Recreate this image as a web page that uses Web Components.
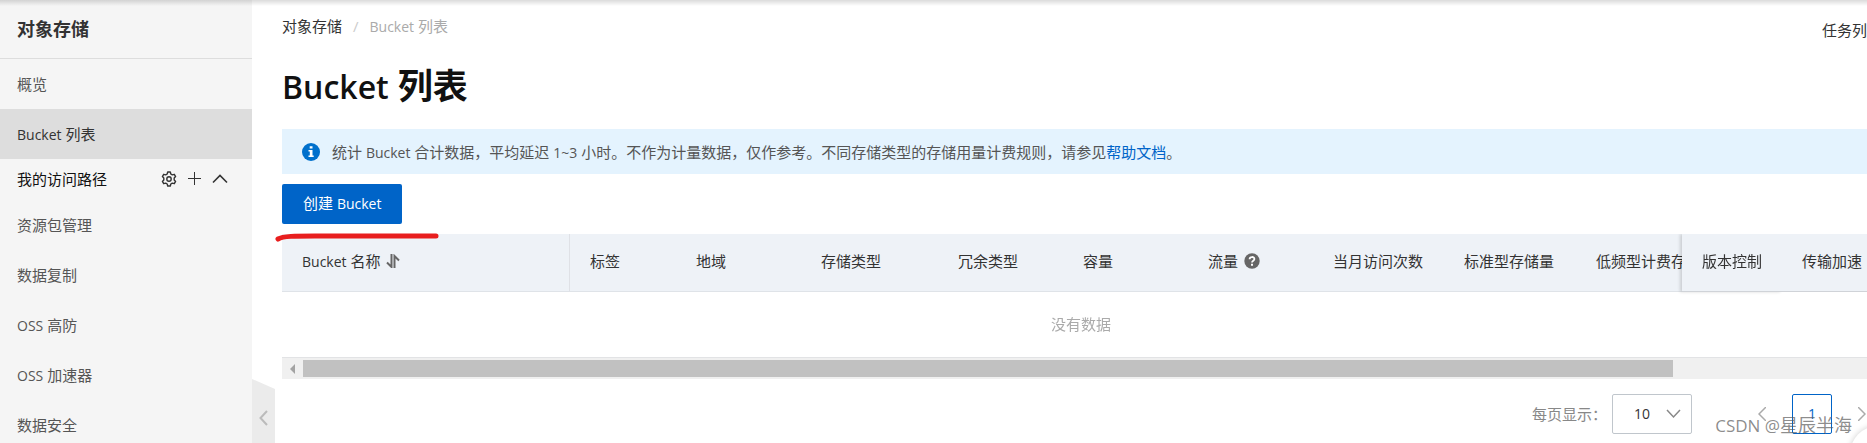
<!DOCTYPE html>
<html lang="zh-CN">
<head>
<meta charset="UTF-8">
<title>Bucket 列表</title>
<style>
  html, body {
    height: 100%;
  }
  body {
    margin: 0;
    overflow: hidden;
    background: #fff;
    color: #333;
    font-family: "Open Sans", "Noto Sans CJK SC", sans-serif;
    font-size: 15px;
    line-height: 20px;
  }
</style>
</head>
<body>
<console-app></console-app>

<script>
  // Rules every component starts from. Latin words run one step smaller than the Chinese text.
  const base = `
    *, *::before, *::after { box-sizing: border-box; }
    .en { font-size: 14px; line-height: 1; }
    a { color: inherit; text-decoration: none; }
    button {
      font: inherit;
      color: inherit;
      background: none;
      border: 0;
      padding: 0;
      margin: 0;
      cursor: pointer;
    }
    svg { display: block; fill: none; }
  `;

  class BaseElement extends HTMLElement {
    constructor() {
      super();
      this.attachShadow({ mode: 'open' });
    }

    connectedCallback() {
      this.shadowRoot.innerHTML = `<style>${base}${this.styles()}</style>${this.markup()}`;
    }

    styles() { return ''; }
    markup() { return ''; }
  }

  class NavItem extends BaseElement {
    styles() {
      return `
        :host { display: block; color: #555; }
        :host([active]) { background: #ddd; color: #333; }
        a { display: block; padding: 15px 17px; }
      `;
    }
    markup() {
      return `<a href="#"><slot></slot></a>`;
    }
  }

  // nav-item content is slotted from here, so its .en spans pick up this element's rules
  class SideNav extends BaseElement {
    styles() {
      return `
        :host {
          display: block;
          position: relative;
          flex: 0 0 252px;
          background: #f5f5f5;
        }
        nav { height: 100%; overflow: hidden; }
        h2 {
          margin: 0;
          padding: 19px 17px;
          border-bottom: 1px solid #ddd;
          font-size: 18px;
          line-height: 20px;
          color: #333;
        }
        .paths {
          display: flex;
          align-items: center;
          gap: 10px;
          height: 41px;
          padding: 0 24px 2px 17px;
          color: #111;
        }
        .paths span { flex: 1; }
        .paths svg { stroke: #333; }
        /* hangs over the content beside the bar */
        .fold {
          position: absolute;
          left: 100%;
          top: 379px;
          width: 23px;
          height: 78px;
          padding-left: 7px;
          background: #ebebeb;
          clip-path: polygon(0 0, 100% 10px, 100% 68px, 0 100%);
        }
      `;
    }
    markup() {
      return `
        <nav>
          <h2>对象存储</h2>
          <nav-item>概览</nav-item>
          <nav-item active><span class="en">Bucket</span> 列表</nav-item>
          <div class="paths">
            <span>我的访问路径</span>
            <button aria-label="设置"><svg width="16" height="16" viewBox="0 0 16 16" stroke-width="1.4" stroke-linejoin="round"><path d="M6.7 1h2.6l.5 2 1.5.9 2-.6 1.3 2.3L13.2 7v2l1.4 1.4-1.3 2.3-2-.6-1.5.9-.5 2H6.7l-.5-2-1.5-.9-2 .6-1.3-2.3L2.8 9V7L1.4 5.6l1.3-2.3 2 .6L6.2 3z"/><circle cx="8" cy="8" r="2.2"/></svg></button>
            <button aria-label="添加"><svg width="15" height="15" viewBox="0 0 15 15"><path d="M7.5 1v13M1 7.5h13"/></svg></button>
            <button aria-label="收起"><svg width="16" height="16" viewBox="0 0 16 16" stroke-width="1.6"><path d="M1 11.5 8 4.500l7 7"/></svg></button>
          </div>
          <nav-item>资源包管理</nav-item>
          <nav-item>数据复制</nav-item>
          <nav-item><span class="en">OSS</span> 高防</nav-item>
          <nav-item><span class="en">OSS</span> 加速器</nav-item>
          <nav-item>数据安全</nav-item>
        </nav>
        <button class="fold" aria-label="收起导航"><svg width="9" height="16" viewBox="0 0 9 16" stroke="#bbb" stroke-width="2"><path d="M8 1 1.5 8 8 15"/></svg></button>
      `;
    }
  }

  class PageHeader extends BaseElement {
    styles() {
      return `
        :host { display: block; }
        .top { display: flex; justify-content: space-between; padding-top: 16px; }
        .crumbs { display: flex; gap: 11px; color: #aaa; }
        .crumbs a { color: #333; }
        .crumbs i { color: #ccc; font-style: normal; }
        .tasks { padding-top: 4px; margin-right: -2px; }
        h1 {
          margin: 22px 0 19px;
          font-size: 35px;
          line-height: 48px;
          font-weight: 700;
          color: #111;
        }
        h1 .en { font-size: 32px; font-weight: 600; }
      `;
    }
    markup() {
      return `
        <div class="top">
          <div class="crumbs"><a href="#">对象存储</a><i>/</i><span><span class="en">Bucket</span> 列表</span></div>
          <a class="tasks" href="#">任务列表</a>
        </div>
        <h1><span class="en">Bucket</span> 列表</h1>
      `;
    }
  }

  class NoticeBar extends BaseElement {
    styles() {
      return `
        :host {
          display: flex;
          align-items: center;
          gap: 12px;
          height: 45px;
          padding: 0 20px;
          background: #e4f3fe;
          color: #555;
        }
      `;
    }
    markup() {
      return `
        <svg width="18" height="18" viewBox="0 0 18 18"><circle cx="9" cy="9" r="9" fill="#0070cc"/><path fill="#fff" d="M7.700 3.300h2.800v2.300H7.700zM6.500 7h4v5.500h1.200V14H6.500v-1.500h1.300V8.500H6.500z"/></svg>
        <div><slot></slot></div>
      `;
    }
  }

  class PrimaryButton extends BaseElement {
    styles() {
      return `
        :host { display: inline-block; vertical-align: top; }
        button {
          height: 40px;
          padding: 0 21px 2px;
          border-radius: 2px;
          background: #0064c8;
          color: #fff;
        }
      `;
    }
    markup() {
      return `<button><slot></slot></button>`;
    }
  }

  class BucketTable extends BaseElement {
    styles() {
      return `
        :host { display: block; container-type: inline-size; }
        .view { overflow: hidden; }
        table {
          width: 1824px;
          table-layout: fixed;
          border-spacing: 0;
        }
        th {
          height: 58px;
          padding: 0 0 3px 20px;
          background: #eef2f7;
          border-bottom: 1px solid #dfe3e8;
          font-weight: 400;
          text-align: left;
          white-space: nowrap;
        }
        th:first-child { border-right: 1px solid #dfe1e6; }
        th div { display: flex; align-items: center; gap: 6px; }
        .pin { position: sticky; border-bottom-color: #d0d3d8; }
        .p1 { right: 98px; box-shadow: -2px 0 3px rgba(0, 0, 0, .15); }
        .p2 { right: 0; }
        td { padding: 0; border-bottom: 1px solid #e2e3e5; }
        .empty {
          position: sticky;
          left: 0;
          width: 100cqw;
          padding: 22px 0 23px;
          text-align: center;
          color: #aaa;
        }
        .scroll {
          display: flex;
          align-items: center;
          height: 21px;
          background: #f0f0f0;
        }
        .scroll button { flex: 0 0 21px; padding-left: 8px; }
        .track { flex: 1; padding-right: 13px; }
        .thumb { width: 87.6%; height: 17px; background: #c1c1c1; }
      `;
    }
    markup() {
      const widths = [288, 106, 125, 137, 125, 125, 125, 131, 132, 332, 100, 98];
      const names = ['标签', '地域', '存储类型', '冗余类型', '容量'];
      return `
        <div class="view">
          <table>
            <colgroup>${widths.map(w => `<col style="width:${w}px">`).join('')}</colgroup>
            <thead>
              <tr>
                <th><div><span><span class="en">Bucket</span> 名称</span>
                  <button aria-label="排序"><svg width="14" height="14" viewBox="0 0 14 14" stroke="#666" stroke-width="2"><path d="M5.500 0v13L1 8.500M8.500 14V2L13 6.500"/></svg></button></div></th>
                ${names.map(n => `<th>${n}</th>`).join('')}
                <th><div>流量
                  <svg width="16" height="16" viewBox="0 0 16 16"><circle cx="8" cy="8" r="7.700" fill="#666"/><path d="M5.600 6.300C5.600 3.300 10.400 3.300 10.400 6.100 10.400 7.800 8 7.700 8 9.600" stroke="#fff" stroke-width="1.800"/><path d="M7 10.800h2v1.900H7z" fill="#fff"/></svg></div></th>
                <th>当月访问次数</th>
                <th>标准型存储量</th>
                <th>低频型计费存储量</th>
                <th class="pin p1">版本控制</th>
                <th class="pin p2">传输加速</th>
              </tr>
            </thead>
            <tbody><tr><td colspan="12"><div class="empty">没有数据</div></td></tr></tbody>
          </table>
        </div>
        <div class="scroll">
          <button aria-label="向左滚动"><svg width="5" height="10" viewBox="0 0 5 10"><path d="M5 0v10L0 5z" fill="#a3a3a3"/></svg></button>
          <div class="track"><div class="thumb"></div></div>
        </div>
      `;
    }
  }

  class PageTurner extends BaseElement {
    styles() {
      return `
        :host {
          display: flex;
          justify-content: flex-end;
          align-items: center;
          padding: 15px 14px 0 0;
          color: #888;
        }
        .size { display: grid; width: 80px; margin: 0 66px 0 5px; }
        .size select, .size svg { grid-area: 1 / 1; }
        select {
          appearance: none;
          height: 40px;
          padding: 0 21px;
          border: 1px solid #c0c6cc;
          border-radius: 2px;
          background: #fff;
          color: #333;
          font: inherit;
          font-size: 14px;
        }
        .size svg { place-self: center end; margin-right: 11px; pointer-events: none; }
        .pages { display: flex; align-items: center; gap: 26px; }
        .now {
          width: 40px;
          height: 40px;
          border: 1px solid #0064c8;
          border-radius: 2px;
          color: #0064c8;
          font-size: 14px;
        }
      `;
    }
    markup() {
      return `
        <label for="size">每页显示：</label>
        <div class="size">
          <select id="size"><option>10</option><option>20</option><option>50</option></select>
          <svg width="15" height="10" viewBox="0 0 15 10" stroke="#888" stroke-width="1.500"><path d="M1 1l6.500 7L14 1"/></svg>
        </div>
        <div class="pages">
          <button aria-label="上一页"><svg width="8" height="14" viewBox="0 0 8 14" stroke="#aaa" stroke-width="1.500"><path d="M8 0 1 7l7 7"/></svg></button>
          <button class="now">1</button>
          <button aria-label="下一页"><svg width="8" height="14" viewBox="0 0 8 14" stroke="#aaa" stroke-width="1.500"><path d="M0 0l7 7-7 7"/></svg></button>
        </div>
      `;
    }
  }

  class ConsoleApp extends BaseElement {
    styles() {
      return `
        :host {
          display: flex;
          position: relative;
          height: 100%;
          overflow: hidden;
        }
        main { flex: 1; min-width: 0; padding-left: 30px; margin-right: -13px; }
        notice-bar { margin-bottom: 10px; }
        notice-bar a { color: #0064c8; }
        .actions { padding-bottom: 10px; }
        .shade {
          position: absolute;
          inset: 0 0 auto;
          height: 6px;
          background: linear-gradient(rgba(0, 0, 0, .14), rgba(0, 0, 0, 0));
        }
        .mark { position: absolute; left: 275px; top: 232px; }
        .stamp {
          position: absolute;
          right: 15px;
          bottom: 6px;
          font-size: 18px;
          line-height: 24px;
          color: rgba(90, 90, 90, .7);
          pointer-events: none;
        }
        .stamp .en { font-size: 17px; }
        .float {
          position: absolute;
          right: -39px;
          bottom: -39px;
          width: 56px;
          height: 56px;
          border-radius: 50%;
          background: #fff;
          box-shadow: 0 0 6px rgba(0, 0, 0, .2);
        }
      `;
    }
    markup() {
      return `
        <side-nav></side-nav>
        <main>
          <page-header></page-header>
          <notice-bar>统计 <span class="en">Bucket</span> 合计数据，平均延迟 <span class="en">1~3</span> 小时。不作为计量数据，仅作参考。不同存储类型的存储用量计费规则，请参见<a href="#">帮助文档</a>。</notice-bar>
          <div class="actions"><primary-button>创建 <span class="en">Bucket</span></primary-button></div>
          <bucket-table></bucket-table>
          <page-turner></page-turner>
        </main>
        <div class="shade"></div>
        <svg class="mark" width="165" height="12" viewBox="0 0 165 12" stroke="#e81e1e" stroke-width="5" stroke-linecap="round" stroke-linejoin="round"><path d="M3 7C8 4 20 4 40 4H161"/></svg>
        <button class="float" aria-label="帮助"></button>
        <div class="stamp"><span class="en">CSDN @</span>星辰半海</div>
      `;
    }
  }

  customElements.define('nav-item', NavItem);
  customElements.define('side-nav', SideNav);
  customElements.define('page-header', PageHeader);
  customElements.define('notice-bar', NoticeBar);
  customElements.define('primary-button', PrimaryButton);
  customElements.define('bucket-table', BucketTable);
  customElements.define('page-turner', PageTurner);
  customElements.define('console-app', ConsoleApp);
</script>
</body>
</html>
